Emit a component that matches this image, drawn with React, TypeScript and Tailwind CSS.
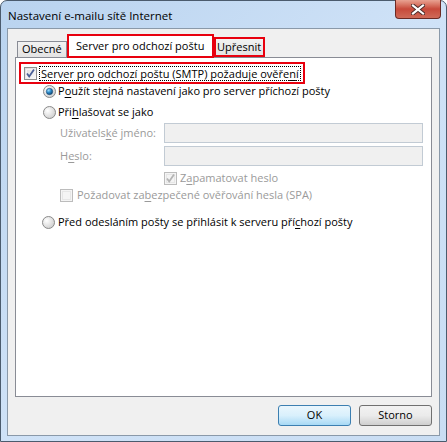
import React from "react";

const font = { fontFamily: '"Open Sans", "Noto Sans", sans-serif' };

function U({ children }: { children: React.ReactNode }) {
  return <span className="underline underline-offset-2">{children}</span>;
}

function CheckBox({ checked, disabled }: { checked?: boolean; disabled?: boolean }) {
  return (
    <div
      className={
        "relative w-[13px] h-[13px] shrink-0 border " +
        (disabled ? "border-[#bcbcbc] bg-[#f4f4f4]" : "border-[#8e8f8f] bg-gradient-to-br from-[#dcdcdc] to-[#fbfbfb]")
      }
    >
      <div className={"absolute inset-[1px] border " + (disabled ? "border-[#e6e6e6]" : "border-[#f4f4f4]")} />
      {checked && (
        <svg className="absolute inset-0" width="11" height="11" viewBox="0 0 11 11">
          <path
            d="M2 5.5 L4.2 8.5 L9 1.5"
            fill="none"
            stroke={disabled ? "#b4b4b4" : "#4a5f97"}
            strokeWidth="1.8"
          />
        </svg>
      )}
    </div>
  );
}

function Radio({ checked }: { checked?: boolean }) {
  return (
    <svg width="13" height="13" viewBox="0 0 13 13" className="shrink-0">
      <defs>
        <radialGradient id="rbg" cx="0.35" cy="0.35" r="0.7">
          <stop offset="0" stopColor="#ffffff" />
          <stop offset="1" stopColor="#cfcfcf" />
        </radialGradient>
        <radialGradient id="rdot" cx="0.35" cy="0.3" r="0.7">
          <stop offset="0" stopColor="#a6e0fb" />
          <stop offset="0.5" stopColor="#2f8fce" />
          <stop offset="1" stopColor="#124a77" />
        </radialGradient>
      </defs>
      <circle cx="6.5" cy="6.5" r="6" fill="url(#rbg)" stroke="#8a8a8a" strokeWidth="1" />
      {checked && <circle cx="6.5" cy="6.5" r="3.2" fill="url(#rdot)" stroke="#1d4e78" strokeWidth="0.6" />}
    </svg>
  );
}

function Btn({ children, def }: { children: React.ReactNode; def?: boolean }) {
  return (
    <div
      className={
        "w-[73px] h-[21px] rounded-[3px] border flex items-center justify-center text-[11px] text-black " +
        (def
          ? "border-[#3c7fb1] bg-gradient-to-b from-[#eaf6fd] via-[#d9f0fc] to-[#a7d9f5]"
          : "border-[#707070] bg-gradient-to-b from-[#f2f2f2] via-[#ebebeb] to-[#cfcfcf]")
      }
    >
      {children}
    </div>
  );
}

export default function App() {
  return (
    <div style={font} className="w-[447px] h-[442px] bg-white">
      <div className="w-full h-full rounded-t-[7px] border border-[#4b5b6d] bg-gradient-to-br from-[#b9d3ef] via-[#cfe2f7] to-[#c9ddf3] flex flex-col px-[6px] pb-[5px]">
        <div className="h-[27px] flex justify-between shrink-0">
          <div className="pt-[6px] pl-[1px] text-[11.5px] text-black">Nastavení e-mailu sítě Internet</div>
          <div className="-mt-[1px] mr-[-1px] w-[46px] h-[19px] rounded-b-[4px] border border-[#6b2a24] border-t-0 bg-gradient-to-b from-[#e8a292] via-[#c7493a] to-[#cf6a58] flex items-center justify-center">
            <svg width="14" height="11" viewBox="0 0 14 11">
              <path d="M2 1.5 L12 9.5 M12 1.5 L2 9.5" stroke="#4a2a28" strokeWidth="4" strokeLinecap="square" />
              <path d="M2 1.5 L12 9.5 M12 1.5 L2 9.5" stroke="#ffffff" strokeWidth="2.2" strokeLinecap="square" />
            </svg>
          </div>
        </div>
        <div className="flex-1 border border-[#8a99a9] bg-[#f0f0f0] flex flex-col px-[7px] text-[11px] text-black">
          {/* tabs */}
          <div className="h-[28px] flex items-end shrink-0 relative z-10">
            <div className="ml-[2px] h-[16px] px-[4px] border border-b-0 border-[#898c95] bg-gradient-to-b from-[#f2f2f2] to-[#e3e3e3] flex items-center">
              Obecné
            </div>
            <div className="-mb-[1px] h-[24px] w-[147px] border-2 border-[#e8000e] bg-white flex items-center justify-center">
              Server pro odchozí poštu
            </div>
            <div className="h-[20px] w-[51px] border-2 border-[#e8000e] bg-gradient-to-b from-[#f2f2f2] to-[#e3e3e3] flex items-center justify-center">
              Upřesnit
            </div>
          </div>
          <div className="h-[340px] border border-[#898c95] bg-white flex flex-col shrink-0">
            <div className="ml-[3px] mt-[4px] h-[22px] w-[286px] border-2 border-[#e8000e] flex items-center pl-[3px]">
              <CheckBox checked />
              <span className="ml-[2px] px-[1px] border border-dotted border-black leading-[13px]">
                Server pro odchozí poštu (SMTP) požaduje ověře<U>n</U>í
              </span>
            </div>
            <div className="ml-[27px] h-[14px] flex items-center gap-[2px]">
              <Radio checked />
              <span>
                P<U>o</U>užít stejná nastavení jako pro server příchozí pošty
              </span>
            </div>
            <div className="ml-[27px] mt-[7px] h-[14px] flex items-center gap-[2px]">
              <Radio />
              <span>
                Při<U>h</U>lašovat se jako
              </span>
            </div>
            <div className="ml-[44px] mt-[4px] h-[20px] flex items-center text-[#9a9a9a]">
              <span className="w-[104px]">
                Uživatels<U>k</U>é jméno:
              </span>
              <div className="w-[259px] h-[20px] border border-[#c2cbd4] bg-[#f0f0f0]" />
            </div>
            <div className="ml-[44px] mt-[3px] h-[20px] flex items-center text-[#9a9a9a]">
              <span className="w-[104px]">
                H<U>e</U>slo:
              </span>
              <div className="w-[259px] h-[20px] border border-[#c2cbd4] bg-[#f0f0f0]" />
            </div>
            <div className="ml-[148px] mt-[5px] h-[14px] flex items-center gap-[3px] text-[#9a9a9a]">
              <CheckBox checked disabled />
              <span>
                Z<U>a</U>pamatovat heslo
              </span>
            </div>
            <div className="ml-[44px] mt-[3px] h-[14px] flex items-center gap-[4px] text-[#9a9a9a]">
              <CheckBox disabled />
              <span>
                Požadovat za<U>b</U>ezpečené ověřování hesla (SPA)
              </span>
            </div>
            <div className="ml-[26px] mt-[13px] h-[14px] flex items-center gap-[3px]">
              <Radio />
              <span>
                Před odesláním pošty se přihlásit k serveru pří<U>c</U>hozí pošty
              </span>
            </div>
          </div>
          <div className="mt-[8px] flex justify-end gap-[8px]">
            <Btn def>OK</Btn>
            <Btn>Storno</Btn>
          </div>
        </div>
      </div>
    </div>
  );
}
